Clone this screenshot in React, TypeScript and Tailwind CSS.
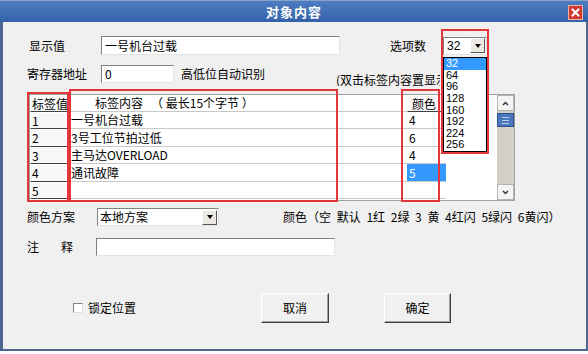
import React from 'react';

const rows = [
  { id: '1', text: '一号机台过载', color: '4', h: 'h-[17px]' },
  { id: '2', text: '3号工位节拍过低', color: '6', h: 'h-[18px]' },
  { id: '3', text: '主马达OVERLOAD', color: '4', h: 'h-[17px]' },
  { id: '4', text: '通讯故障', color: '5', h: 'h-[18px]' },
  { id: '5', text: '', color: '', h: 'h-[17px]' },
];

const options = ['32', '64', '96', '128', '160', '192', '224', '256'];

const ArrowBtn: React.FC = () => (
  <div className="flex h-[15px] w-[15px] shrink-0 items-center justify-center border border-t-white border-l-white border-r-[#555] border-b-[#555] bg-[#ece9e3]">
    <div className="h-0 w-0 border-l-[3.5px] border-r-[3.5px] border-t-[4px] border-l-transparent border-r-transparent border-t-black" />
  </div>
);

const RaisedCell: React.FC<{ className?: string; children?: React.ReactNode }> = ({ className = '', children }) => (
  <div className={`flex items-center overflow-hidden whitespace-nowrap border border-t-white border-l-white border-r-[#404040] border-b-[#404040] bg-[#f7f7f7] pl-[1px] ${className}`}>{children}</div>
);

const App: React.FC = () => {
  return (
    <div className="relative h-[354px] w-[588px] overflow-hidden bg-white font-['Noto_Sans_CJK_SC','Liberation_Sans',sans-serif] text-[12px] leading-none text-black">
      {/* title bar */}
      <div className="relative flex h-[22px] w-[588px] items-center justify-center border-t border-[#8aa2c4] bg-linear-to-b from-[#4d7cc2] to-[#3462aa]">
        <span className="text-[13px] font-bold tracking-[1px] text-white">对象内容</span>
        <div className="absolute left-[568px] top-[4px] flex h-[15px] w-[15px] items-center justify-center border border-[#f0b0a8] bg-[#cf3a2c]">
          <svg width="9" height="9" viewBox="0 0 9 9">
            <path d="M1.5 1.5 L7.5 7.5 M7.5 1.5 L1.5 7.5" stroke="white" strokeWidth="2.2" strokeLinecap="round" />
          </svg>
        </div>
      </div>

      {/* body */}
      <div className="flex h-[329px] w-[588px] flex-col border-l-[3px] border-r-[2px] border-b-[2px] border-[#4d6890] bg-[#f0f0f0]">
        {/* row 1 */}
        <div className="mt-[14px] flex h-[19px] items-center">
          <span className="ml-[26px] w-[72px]">显示值</span>
          <div className="flex h-[19px] w-[239px] items-center border border-t-[#808080] border-l-[#808080] border-r-[#e4e4e4] border-b-[#e4e4e4] bg-white pl-[3px]">一号机台过载</div>
          <span className="ml-[50px] w-[53px]">选项数</span>
          <div className="flex h-[18px] w-[44px] items-center justify-between border border-t-[#808080] border-l-[#808080] border-r-[#e4e4e4] border-b-[#e4e4e4] bg-white pl-[3px] pr-[1px] font-['Liberation_Sans',sans-serif]">
            <span>32</span>
            <ArrowBtn />
          </div>
        </div>

        {/* row 2 */}
        <div className="mt-[10px] flex h-[18px] items-start">
          <span className="ml-[24px] w-[74px] leading-[18px]">寄存器地址</span>
          <div className="flex h-[18px] w-[73px] items-center border border-t-[#808080] border-l-[#808080] border-r-[#e4e4e4] border-b-[#e4e4e4] bg-white pl-[3px]">0</div>
          <span className="ml-[7px] w-[155px] leading-[18px]">高低位自动识别</span>
          <span className="mt-[9px] w-[104px] overflow-hidden whitespace-nowrap leading-[12px]">(双击标签内容置显示</span>
        </div>

        {/* grid */}
        <div className="ml-[26px] mt-[11px] flex h-[107px] w-[486px] border border-[#a0a0a0] bg-white">
          <div className="flex w-[416px] flex-col">
            <div className="flex h-[17px]">
              <RaisedCell className="w-[39px]">标签值</RaisedCell>
              <div className="flex w-[338px] items-center border-b border-[#c8c8c8] bg-white pl-[26px]">
                标签内容&nbsp;&nbsp;&nbsp;（ 最长15个字节 ）
              </div>
              <RaisedCell className="w-[39px] border-l-[#404040] pl-[4px]">颜色</RaisedCell>
            </div>
            {rows.map((r) => (
              <div key={r.id} className={`flex ${r.h}`}>
                <RaisedCell className="w-[39px]">{r.id}</RaisedCell>
                <div className="flex w-[338px] items-center border-b border-[#c8c8c8] pl-[2px]">{r.text}</div>
                <div
                  className={`flex w-[39px] items-center border-b border-[#c8c8c8] pl-[2px] ${
                    r.color === '5' ? 'bg-[#3399ff] text-white' : ''
                  }`}
                >
                  {r.color}
                </div>
              </div>
            ))}
          </div>
          <div className="w-[51px] bg-white" />
          {/* scrollbar */}
          <div className="flex w-[17px] flex-col bg-[#d4d0c8]">
            <div className="flex h-[16px] items-center justify-center border border-[#b8b4ac] bg-[#f4f4f4]">
              <svg width="7" height="5" viewBox="0 0 7 5">
                <path d="M1 4 L3.5 1.5 L6 4" stroke="#333" strokeWidth="1.4" fill="none" />
              </svg>
            </div>
            <div className="mt-[2px] flex h-[14px] flex-col items-center justify-center gap-[2px] border border-[#2a4f8a] bg-[#4a78bd]">
              <div className="h-px w-[7px] bg-[#b9cdea]" />
              <div className="h-px w-[7px] bg-[#b9cdea]" />
              <div className="h-px w-[7px] bg-[#b9cdea]" />
            </div>
            <div className="flex-1" />
            <div className="flex h-[16px] items-center justify-center border border-[#b8b4ac] bg-[#f4f4f4]">
              <svg width="7" height="5" viewBox="0 0 7 5">
                <path d="M1 1 L3.5 3.5 L6 1" stroke="#333" strokeWidth="1.4" fill="none" />
              </svg>
            </div>
          </div>
        </div>

        {/* color scheme row */}
        <div className="mt-[7px] flex h-[18px] items-center">
          <span className="ml-[24px] w-[70px]">颜色方案</span>
          <div className="flex h-[18px] w-[122px] items-center justify-between border border-t-[#808080] border-l-[#808080] border-r-[#e4e4e4] border-b-[#e4e4e4] bg-white pl-[2px] pr-[1px]">
            <span>本地方案</span>
            <ArrowBtn />
          </div>
          <span className="ml-[64px] whitespace-nowrap [word-spacing:3px]">颜色（空 默认 1红 2绿 3 黄 4红闪 5绿闪 6黄闪）</span>
        </div>

        {/* note row */}
        <div className="mt-[12px] flex h-[18px] items-center">
          <span className="ml-[24px] w-[34px]">注</span>
          <span className="w-[35px]">释</span>
          <div className="h-[18px] w-[239px] border border-t-[#808080] border-l-[#808080] border-r-[#e4e4e4] border-b-[#e4e4e4] bg-white" />
        </div>

        {/* buttons row */}
        <div className="mt-[37px] flex h-[30px] items-center">
          <div className="ml-[70px] flex w-[188px] items-center">
            <div className="h-[10px] w-[10px] border border-t-[#808080] border-l-[#808080] border-r-[#e0e0e0] border-b-[#e0e0e0] bg-white" />
            <span className="ml-[5px]">锁定位置</span>
          </div>
          <div className="flex h-[30px] w-[68px] items-center justify-center border border-t-white border-l-white border-r-[#404040] border-b-[#404040] bg-[#f0f0f0] shadow-[inset_-1px_-1px_0_#a0a0a0]">
            取消
          </div>
          <div className="ml-[55px] flex h-[30px] w-[67px] items-center justify-center border border-t-white border-l-white border-r-[#404040] border-b-[#404040] bg-[#f0f0f0] shadow-[inset_-1px_-1px_0_#a0a0a0]">
            确定
          </div>
        </div>
      </div>

      {/* dropdown list popup */}
      <div className="absolute left-[443px] top-[57px] flex h-[95px] w-[44px] flex-col border border-black bg-white font-['Liberation_Sans',sans-serif]">
        {options.map((o, i) => (
          <div
            key={o}
            className={`flex h-[11.6px] items-center pl-[2px] text-[11px] leading-[11px] ${i === 0 ? 'bg-[#3399ff] text-white' : ''}`}
          >
            {o}
          </div>
        ))}
      </div>

      {/* red annotation boxes */}
      <div className="absolute left-[27px] top-[92px] h-[110px] w-[42px] border-2 border-[#e4363a]" />
      <div className="absolute left-[69px] top-[89px] h-[113px] w-[269px] border-2 border-[#e4363a]" />
      <div className="absolute left-[401px] top-[89px] h-[113px] w-[39px] border-2 border-[#e4363a]" />
      <div className="absolute left-[441px] top-[29px] h-[125px] w-[48px] border-2 border-[#e4363a]" />
    </div>
  );
};

export default App;
